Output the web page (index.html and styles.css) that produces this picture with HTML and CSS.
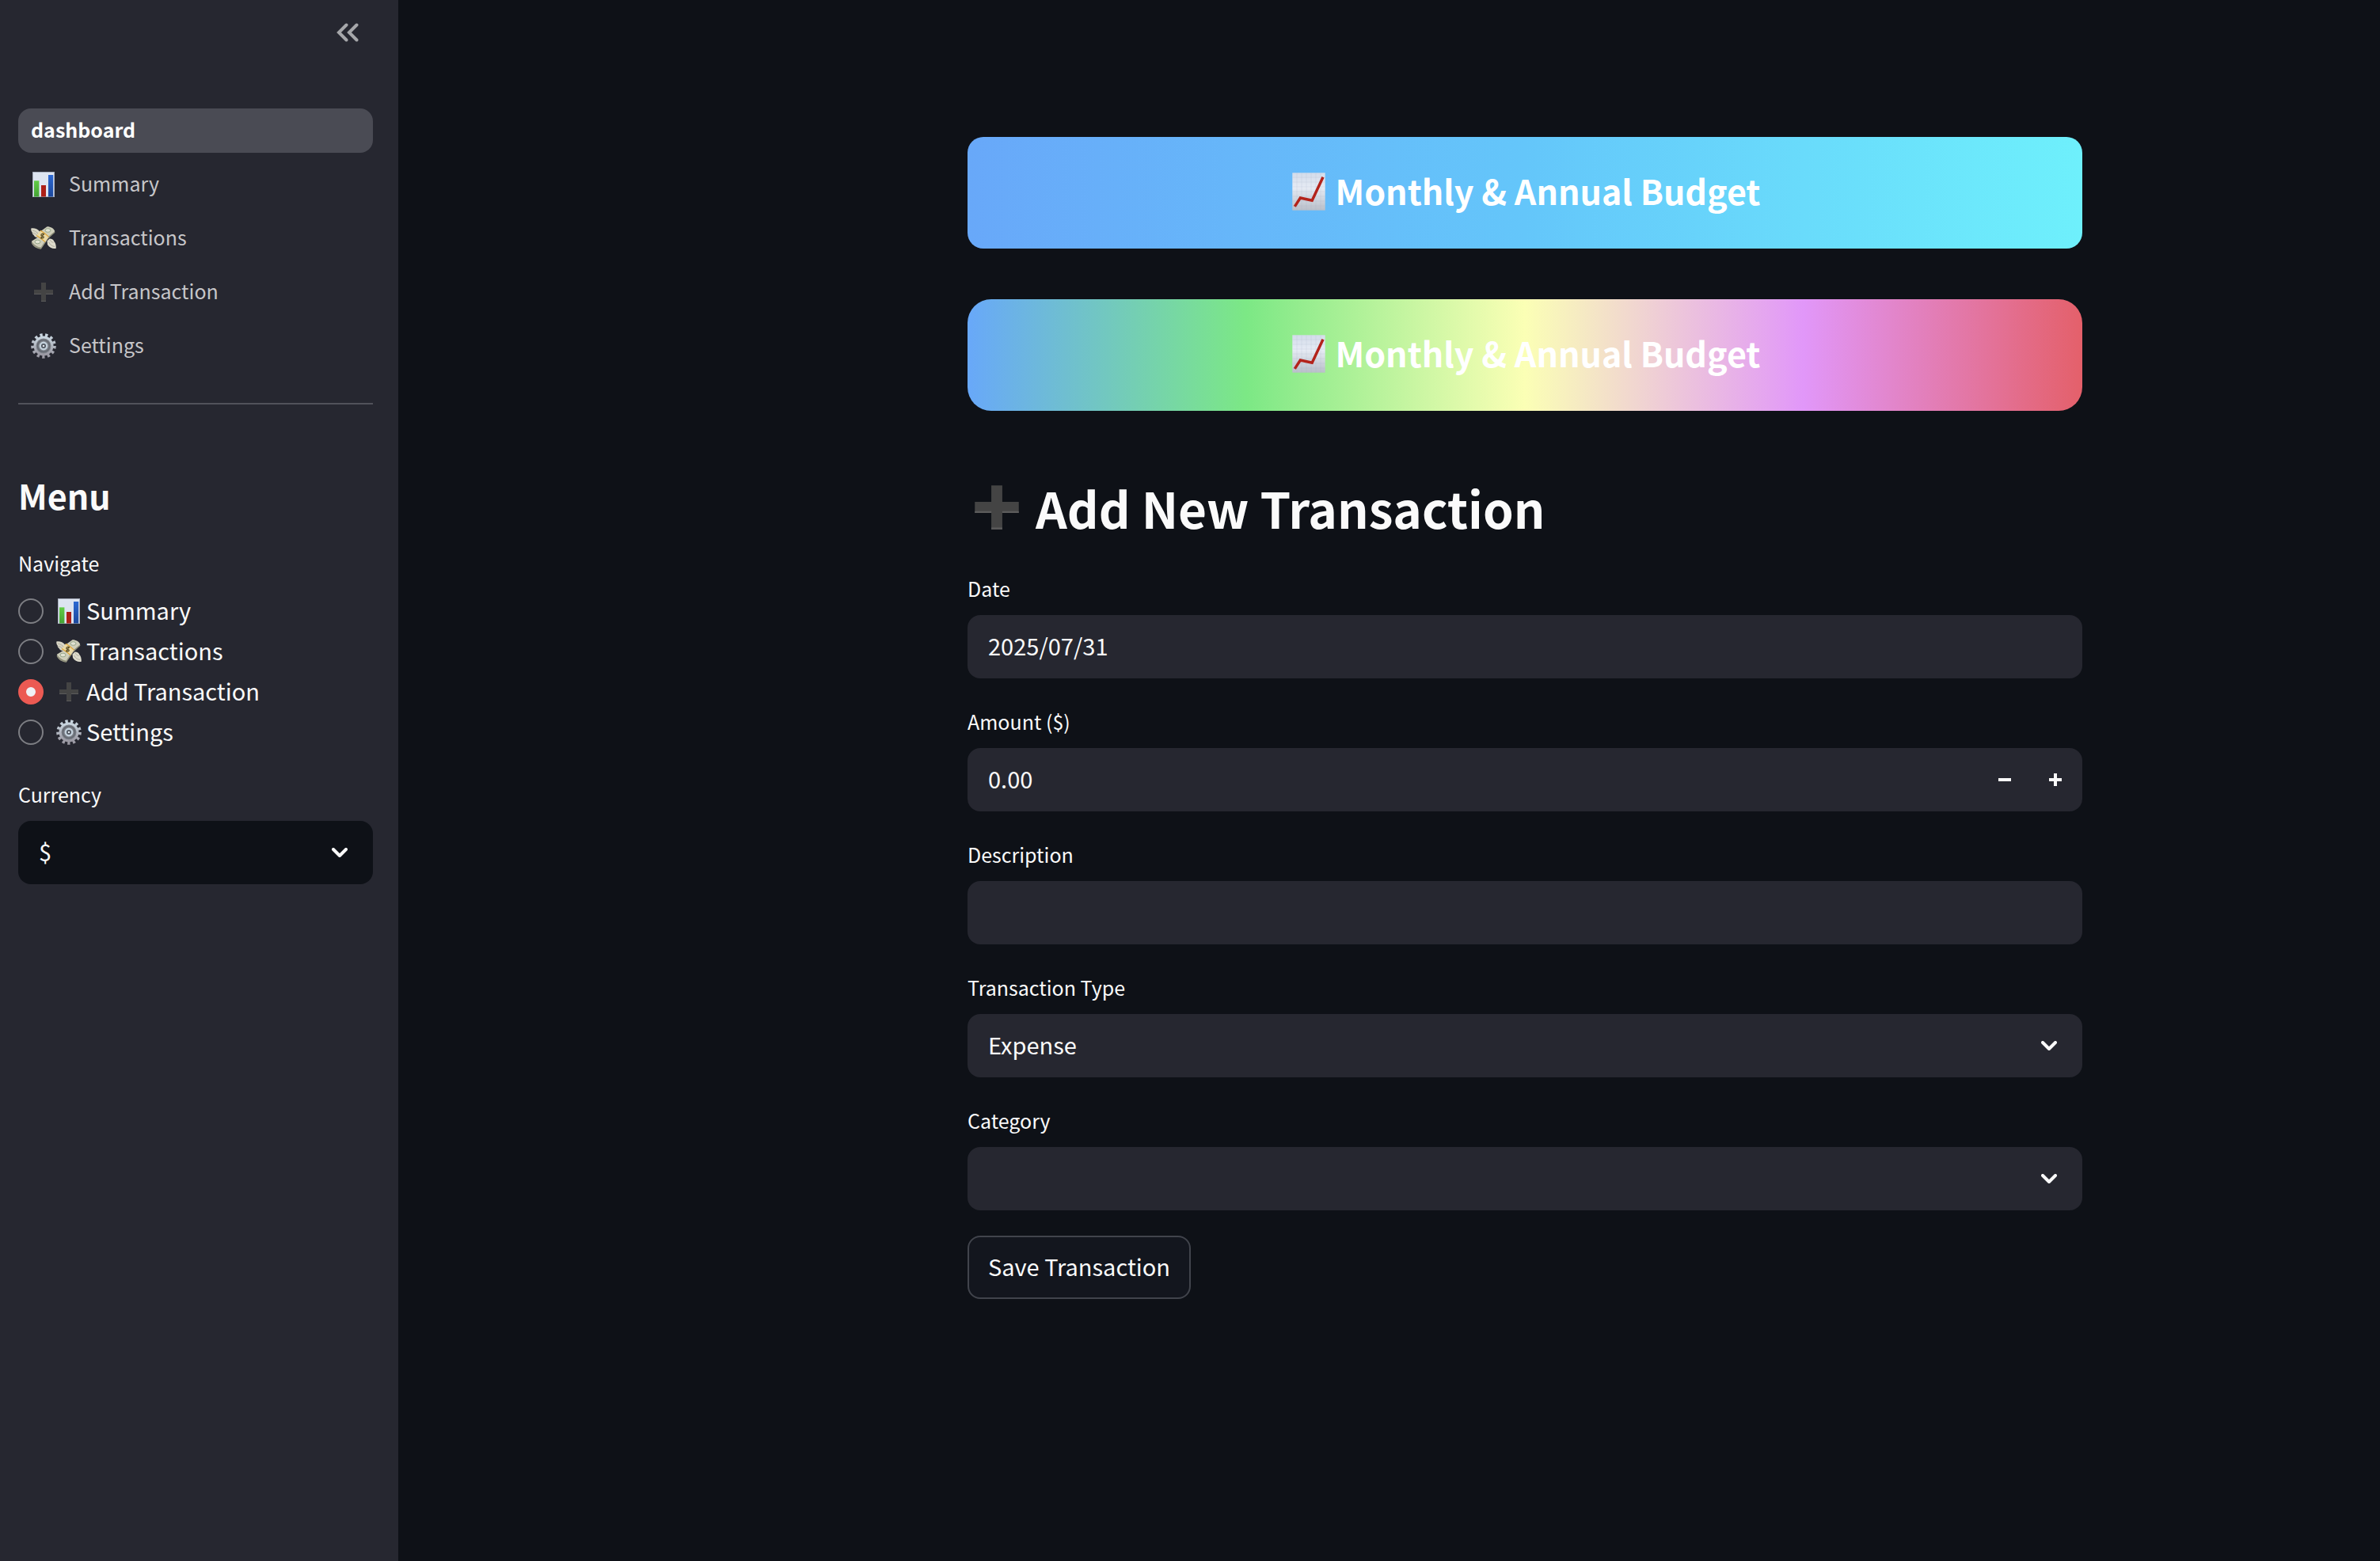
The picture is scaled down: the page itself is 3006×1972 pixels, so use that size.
FILE: index.html
```html
<!DOCTYPE html>
<html lang="en">
<head>
<meta charset="utf-8">
<meta name="viewport" content="width=device-width, initial-scale=1">
<title>Monthly &amp; Annual Budget</title>
<link rel="stylesheet" href="styles.css">
</head>
<body>
<svg class="sprite" aria-hidden="true">
  <defs>
    <linearGradient id="paper" x1="0" y1="0" x2="0" y2="1"><stop offset="0" stop-color="#d3dcea"/><stop offset=".4" stop-color="#e6ebf4"/><stop offset="1" stop-color="#b9bfc9"/></linearGradient>
    <linearGradient id="bar-green" x1="0" y1="0" x2="0" y2="1"><stop offset="0" stop-color="#62cc45"/><stop offset="1" stop-color="#45a235"/></linearGradient>
    <linearGradient id="bar-blue" x1="0" y1="0" x2="0" y2="1"><stop offset="0" stop-color="#2c68d2"/><stop offset="1" stop-color="#1c489c"/></linearGradient>
    <linearGradient id="steel" x1="0" y1="0" x2="0" y2="1"><stop offset="0" stop-color="#c9d6e0"/><stop offset="1" stop-color="#9a98a2"/></linearGradient>
  </defs>
  <symbol id="icon-bars" viewBox="0 0 32 32">
    <rect x="2.5" y=".5" width="27" height="31" fill="#dde4f0" stroke="#a9b0be"/>
    <rect x="4" y="11.3" width="6.4" height="20.2" fill="url(#bar-green)"/>
    <rect x="13" y="17" width="6" height="14.5" fill="#ad1f17"/>
    <rect x="22" y="4" width="6.2" height="27.5" fill="url(#bar-blue)"/>
  </symbol>
  <symbol id="icon-trend" viewBox="0 0 32 32">
    <rect x="2.2" y=".2" width="27.6" height="31.6" fill="url(#paper)"/>
    <path d="M6 .5v31M10 .5v31M14 .5v31M18 .5v31M22 .5v31M26 .5v31M2.5 4h27M2.5 8h27M2.5 12h27M2.5 16h27M2.5 20h27M2.5 24h27M2.5 28h27" stroke="#9cb0c4" stroke-opacity=".28" stroke-width=".4"/>
    <path d="M4.2 28.6 8.9 21.3 18.8 23.5 28 3.8" fill="none" stroke="#b3231b" stroke-width="2.300"/>
  </symbol>
  <symbol id="icon-money" viewBox="0 0 32 32">
    <path d="M.3 3.6C3 2.700 8.500 3.500 11.500 8L12.500 12 8.500 15C5.500 15 4 13.500 3.600 12 2.200 11.300 1.600 10 1.700 8.600.5 7.200.1 5.500.3 3.600Z" fill="#d9d6c6"/>
    <path d="M2 6.200C5 6.500 8 8 9.500 11M2.200 9.500C5 9.500 7 10.800 8.500 13" fill="none" stroke="#9f9c8c" stroke-width=".7"/>
    <path d="M31.800 28.800C28 29.800 23.500 28 21 24L20.500 19.500 23.500 16.500C27 16.500 28.500 18 29.300 20 31 21.500 32 25 31.800 28.800Z" fill="#dedbcc"/>
    <path d="M30 26.500C26.500 26 24 24 22.600 20.800M28.500 21.500C26.500 21 25 19.800 24 18" fill="none" stroke="#9f9c8c" stroke-width=".7"/>
    <path d="M11.500 9 20.500 2.500C25 2 29 4.500 30.500 8.500L21.500 17 12.800 29.800C8 29.500 2.500 26.500.5 21.500L8.500 16Z" fill="#9c9b86"/>
    <path d="M11.500 7.800 20.500 1.300C25 1.200 28.500 3.400 30.300 7L21 15 12.500 27.600C8 27 3 24 .8 19.800L8.500 15Z" fill="#cfceba"/>
    <path d="M1.500 21.300C4 25 8 27.800 12.500 28.700M22 14.800 30 8.500" fill="none" stroke="#82846e" stroke-width=".8"/>
    <ellipse cx="21.500" cy="6" rx="3.500" ry="2.300" fill="#e2e3d3" stroke="#8fa183" stroke-width=".9"/>
    <ellipse cx="8.500" cy="20.500" rx="3.500" ry="2.300" fill="#e2e3d3" stroke="#8fa183" stroke-width=".9"/>
    <path d="M12 6.200C15.500 8 19.500 11 22.500 14.200L18 20.700C14.500 17.300 11 14.800 7 12.500Z" fill="#ead9a6"/>
    <path d="M12 6.200C15.500 8 19.500 11 22.500 14.200M7 12.500C11 14.800 14.500 17.300 18 20.700" fill="none" stroke="#e0a32e" stroke-width="1.100"/>
    <path d="M17 11.300C15.500 9.700 13 10.200 12.800 12 12.700 13.800 16.500 12.800 16.300 14.700 16 16.400 13.500 16.200 12.200 14.700M16.300 9.700 12.700 16.600" fill="none" stroke="#57491f" stroke-width="1.200"/>
  </symbol>
  <symbol id="icon-plus" viewBox="0 0 32 32">
    <path d="M13 4h6v9h9v6h-9v9h-6v-9H4v-6h9Z" fill="#444"/>
    <path d="M4 18.500h9M19 18.500h9M13 27.500h6" stroke="#5c5c5c"/>
  </symbol>
  <symbol id="icon-gear" viewBox="0 0 32 32">
    <circle cx="16" cy="16" r="13.800" fill="none" stroke="url(#steel)" stroke-width="4" stroke-dasharray="3.300 3.370"/>
    <circle cx="16" cy="16" r="11" fill="#7c8088" stroke="url(#steel)" stroke-width="3"/>
    <circle cx="16" cy="16" r="7.600" fill="none" stroke="#656a73" stroke-width="1.500"/>
    <circle cx="16" cy="16" r="4.200" fill="#4d545e" stroke="#c3d1dc" stroke-width="2.400"/>
    <circle cx="16" cy="16" r="1.300" fill="#dfe6ec"/>
  </symbol>
  <symbol id="icon-chevron" viewBox="0 0 20 12">
    <path d="m2 2 8 8 8-8" fill="none" stroke="currentColor" stroke-width="4" stroke-linecap="round" stroke-linejoin="round"/>
  </symbol>
</svg>

<div class="app">
  <aside class="sidebar">
    <div class="sidebar-header">
      <button class="collapse" type="button" aria-label="Collapse sidebar">
        <svg viewBox="0 0 28 24" aria-hidden="true"><path d="M12.500 2.500 3 12l9.500 9.500M25.500 2.500 16 12l9.500 9.500" fill="none" stroke="currentColor" stroke-width="4" stroke-linecap="round"/></svg>
      </button>
    </div>

    <nav aria-label="Pages">
      <ul class="pages">
        <li><a class="page page-active" href="#dashboard" aria-current="page"><span class="caption">dashboard</span></a></li>
        <li><a class="page" href="#summary"><svg class="emoji" aria-hidden="true"><use href="#icon-bars"/></svg><span class="caption">Summary</span></a></li>
        <li><a class="page" href="#transactions"><svg class="emoji" aria-hidden="true"><use href="#icon-money"/></svg><span class="caption">Transactions</span></a></li>
        <li><a class="page" href="#add"><svg class="emoji" aria-hidden="true"><use href="#icon-plus"/></svg><span class="caption">Add Transaction</span></a></li>
        <li><a class="page" href="#settings"><svg class="emoji" aria-hidden="true"><use href="#icon-gear"/></svg><span class="caption">Settings</span></a></li>
      </ul>
    </nav>

    <hr class="divider">

    <h2 class="menu-title">Menu</h2>

    <fieldset class="navigate">
      <legend class="label">Navigate</legend>
      <label class="choice"><input class="radio" type="radio" name="view"><svg class="emoji" aria-hidden="true"><use href="#icon-bars"/></svg><span class="caption">Summary</span></label>
      <label class="choice"><input class="radio" type="radio" name="view"><svg class="emoji" aria-hidden="true"><use href="#icon-money"/></svg><span class="caption">Transactions</span></label>
      <label class="choice"><input class="radio" type="radio" name="view" checked><svg class="emoji" aria-hidden="true"><use href="#icon-plus"/></svg><span class="caption">Add Transaction</span></label>
      <label class="choice"><input class="radio" type="radio" name="view"><svg class="emoji" aria-hidden="true"><use href="#icon-gear"/></svg><span class="caption">Settings</span></label>
    </fieldset>

    <div class="field">
      <label class="label" for="currency">Currency</label>
      <div class="box box-dark">
        <select class="control" id="currency"><option>$</option><option>€</option><option>£</option></select>
        <svg class="chevron" aria-hidden="true"><use href="#icon-chevron"/></svg>
      </div>
    </div>
  </aside>

  <main class="main">
    <div class="content">
      <div class="banner banner-blue"><svg class="banner-icon" aria-hidden="true"><use href="#icon-trend"/></svg><span class="banner-text">Monthly &amp; Annual Budget</span></div>
      <div class="banner banner-rainbow"><svg class="banner-icon" aria-hidden="true"><use href="#icon-trend"/></svg><span class="banner-text">Monthly &amp; Annual Budget</span></div>

      <h1 class="title"><svg class="title-icon" aria-hidden="true"><use href="#icon-plus"/></svg>Add New Transaction</h1>

      <form class="form">
        <div class="field">
          <label class="label" for="date">Date</label>
          <div class="box"><input class="control" id="date" type="text" value="2025/07/31"></div>
        </div>
        <div class="field">
          <label class="label" for="amount">Amount ($)</label>
          <div class="box box-steps">
            <input class="control" id="amount" type="text" inputmode="decimal" value="0.00">
            <button class="step" type="button" aria-label="Decrease"><svg viewBox="0 0 16 16" aria-hidden="true"><path d="M0 8h16" stroke="currentColor" stroke-width="4"/></svg></button>
            <button class="step" type="button" aria-label="Increase"><svg viewBox="0 0 16 16" aria-hidden="true"><path d="M0 8h16M8 0v16" stroke="currentColor" stroke-width="4"/></svg></button>
          </div>
        </div>
        <div class="field">
          <label class="label" for="description">Description</label>
          <div class="box"><input class="control" id="description" type="text"></div>
        </div>
        <div class="field">
          <label class="label" for="type">Transaction Type</label>
          <div class="box">
            <select class="control" id="type"><option>Expense</option><option>Income</option></select>
            <svg class="chevron" aria-hidden="true"><use href="#icon-chevron"/></svg>
          </div>
        </div>
        <div class="field">
          <label class="label" for="category">Category</label>
          <div class="box">
            <select class="control" id="category"><option></option></select>
            <svg class="chevron" aria-hidden="true"><use href="#icon-chevron"/></svg>
          </div>
        </div>
        <button class="save" type="button">Save Transaction</button>
      </form>
    </div>
  </main>
</div>
</body>
</html>
```
FILE: styles.css
```css
*,
*::before,
*::after {
  box-sizing: border-box;
}

:root {
  --bg: #0e1117;
  --panel: #262730;
  --text: #fafafa;
  --small: 25px;
  --body: 29px;
  --heading: 43px;
}

body {
  margin: 0;
  background: var(--bg);
  color: var(--text);
  font-family: "Noto Sans CJK SC", "Noto Sans", sans-serif;
  font-size: var(--body);
}

button,
input,
select {
  margin: 0;
  color: inherit;
  font: inherit;
}

button {
  cursor: pointer;
}

.sprite {
  position: absolute;
  width: 0;
  height: 0;
}

.app {
  display: flex;
  min-height: 100vh;
}

/* Sidebar */

.sidebar {
  flex: 0 0 503px;
  padding: 0 32px 48px 23px;
  background: var(--panel);
}

.sidebar-header {
  display: flex;
  justify-content: flex-end;
  height: 137px;
  padding: 13px 4px 0 0;
}

.collapse {
  display: grid;
  place-items: center;
  width: 56px;
  height: 56px;
  padding: 0;
  border: 0;
  background: none;
  color: #a6a7aa;
}

.collapse svg {
  width: 28px;
  height: 24px;
}

.pages {
  display: grid;
  gap: 12px;
  margin: 0;
  padding: 0;
  list-style: none;
}

.page {
  display: flex;
  align-items: center;
  gap: 16px;
  height: 56px;
  padding: 0 16px;
  border-radius: 16px;
  color: #c6c6c9;
  font-size: var(--small);
  text-decoration: none;
}

.page-active {
  background: #4a4b54;
  color: #fff;
  font-weight: 700;
}

.caption {
  padding-bottom: 4px;
}

.emoji {
  flex: none;
  width: 32px;
  height: 32px;
}

.divider {
  height: 2px;
  margin: 44px 0 86px;
  border: 0;
  background: #51525a;
}

.menu-title {
  margin: 0 0 40px;
  font-size: var(--heading);
  line-height: 56px;
}

.label {
  display: block;
  padding: 0;
  font-size: var(--small);
  line-height: 36px;
}

.navigate {
  margin: 0 0 35px;
  padding: 0;
  border: 0;
}

.navigate .label {
  margin-bottom: 17px;
}

.choice {
  display: flex;
  align-items: center;
  height: 51px;
  line-height: 40px;
}

.choice .emoji {
  margin: 0 6px 0 16px;
}

.radio {
  flex: none;
  width: 32px;
  height: 32px;
  border: 2px solid #7d7e83;
  border-radius: 50%;
  appearance: none;
}

.radio:checked {
  border: 10px solid #ec5a53;
  background: #f0f2f6;
}

/* Fields */

.field {
  display: grid;
  gap: 16px;
}

.box {
  display: grid;
  grid-template-columns: 1fr;
  grid-auto-flow: column;
  align-items: center;
  height: 80px;
  border-radius: 16px;
  background: var(--panel);
}

.box-dark {
  background: var(--bg);
}

.box-steps {
  padding-right: 2px;
}

.control {
  grid-area: 1 / 1;
  width: 100%;
  min-width: 0;
  height: 80px;
  padding: 0 26px 4px;
  border: 0;
  outline: 0;
  background: none;
  appearance: none;
}

.chevron {
  grid-area: 1 / 1;
  justify-self: end;
  width: 20px;
  height: 12px;
  margin-right: 32px;
  pointer-events: none;
}

.step {
  display: grid;
  place-items: center;
  width: 64px;
  height: 80px;
  padding: 0;
  border: 0;
  background: none;
}

.step svg {
  width: 16px;
  height: 16px;
}

/* Main column */

.main {
  flex: 1;
  display: grid;
  grid-template-columns: 719fr minmax(0, 1408px) 376fr;
  min-width: 0;
  padding: 173px 0 120px;
}

.content {
  grid-column: 2;
}

.banner {
  display: flex;
  align-items: center;
  justify-content: center;
  gap: 10px;
  height: 141px;
  padding-bottom: 4px;
  color: #fff;
  font-size: var(--heading);
  font-weight: 700;
}

.banner-blue {
  margin-bottom: 64px;
  border-radius: 20px;
  background: linear-gradient(90deg, #68a8f9, #64c6fa 50%, #6ef0fc);
}

.banner-rainbow {
  border-radius: 30px;
  background: linear-gradient(90deg, #68a8f9, #7ce885 25%, #fbffb5 50%, #e197f9 75%, #e4606a);
}

.banner-icon {
  width: 48px;
  height: 48px;
}

.banner-text {
  padding-bottom: 4px;
}

.title {
  display: flex;
  align-items: center;
  gap: 12px;
  margin: 82px 0 44px;
  font-size: 62px;
  line-height: 80px;
}

.title-icon {
  width: 74px;
  height: 74px;
}

.form {
  display: grid;
  gap: 36px;
}

.save {
  justify-self: start;
  height: 80px;
  margin-top: -4px;
  padding: 0 24px 4px;
  border: 2px solid #41444c;
  border-radius: 16px;
  background: #13161e;
}
```
